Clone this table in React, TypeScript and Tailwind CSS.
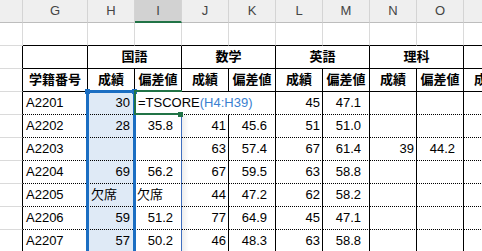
const grid = 'grid grid-cols-[23px_65px_47px_47px_47px_47px_47px_47px_47px_47px_47px]';

const letters = ['', 'G', 'H', 'I', 'J', 'K', 'L', 'M', 'N', 'O', 'P'];

type Row = { id: string; h: string; i: string; j: string; k: string; l: string; m: string; n: string; o: string };

const rows: Row[] = [
  { id: 'A2201', h: '30', i: '', j: '', k: '', l: '45', m: '47.1', n: '', o: '' },
  { id: 'A2202', h: '28', i: '35.8', j: '41', k: '45.6', l: '51', m: '51.0', n: '', o: '' },
  { id: 'A2203', h: '', i: '', j: '63', k: '57.4', l: '67', m: '61.4', n: '39', o: '44.2' },
  { id: 'A2204', h: '69', i: '56.2', j: '67', k: '59.5', l: '63', m: '58.8', n: '', o: '' },
  { id: 'A2205', h: '欠席', i: '欠席', j: '44', k: '47.2', l: '62', m: '58.2', n: '', o: '' },
  { id: 'A2206', h: '59', i: '51.2', j: '77', k: '64.9', l: '45', m: '47.1', n: '', o: '' },
  { id: 'A2207', h: '57', i: '50.2', j: '46', k: '48.3', l: '63', m: '58.8', n: '', o: '' },
];

const isNum = (v: string) => /^[0-9.]+$/.test(v);

// data cell: bottom dotted, right border solid
const dataCell = 'h-[23px] leading-[22px] border-b border-r border-b-black [border-bottom-style:dotted] whitespace-nowrap';

const Score = ({ v, extra = '' }: { v: string; extra?: string }) => (
  <div className={`${dataCell} border-r-black ${isNum(v) ? 'text-right pr-[2px]' : 'pl-[3px]'} ${extra}`}>{v}</div>
);

const Dev = ({ v, extra = '' }: { v: string; extra?: string }) => (
  <div className={`${dataCell} ${isNum(v) ? 'text-right pr-[8px]' : 'pl-[2px]'} ${extra}`}>{v}</div>
);

const App = () => {
  return (
    <div className="relative w-[482px] h-[251px] overflow-hidden bg-white text-[13px] text-black font-['Liberation_Sans','Noto_Sans_CJK_JP',sans-serif]">
      {/* column headers */}
      <div className={grid}>
        {letters.map((c) => (
          <div
            key={c || 'F'}
            className={`h-[23px] flex items-center justify-center border-r border-r-[#d4d4d4] text-[#444] ${
              c === 'I' ? 'bg-[#d2d2d2] border-b-2 border-b-[#217346]' : 'bg-[#efefef] border-b border-b-[#bdbdbd]'
            }`}
          >
            {c}
          </div>
        ))}
      </div>

      {/* row 1 (blank) */}
      <div className={grid}>
        {letters.map((c, idx) => (
          <div
            key={c || 'F'}
            className={`h-[23px] border-r border-r-[#dadada] border-b ${idx === 0 ? 'border-b-[#dadada]' : 'border-b-black'}`}
          />
        ))}
      </div>

      {/* row 2: subjects */}
      <div className={`${grid} font-bold`}>
        <div className="h-[23px] border-r border-r-black border-b border-b-[#dadada]" />
        <div className="h-[23px] border-r border-b border-black" />
        {['国語', '数学', '英語', '理科'].map((s) => (
          <div key={s} className="col-span-2 h-[23px] flex items-center justify-center border-r border-b border-black">
            {s}
          </div>
        ))}
        <div className="h-[23px] border-b border-black" />
      </div>

      {/* row 3: field names */}
      <div className={`${grid} font-bold`}>
        <div className="h-[23px] border-r border-r-black border-b border-b-[#dadada]" />
        {['学籍番号', '成績', '偏差値', '成績', '偏差値', '成績', '偏差値', '成績', '偏差値', '成績'].map((s, idx) => (
          <div key={idx} className="h-[23px] flex items-center justify-center border-r border-b border-black whitespace-nowrap">
            {s}
          </div>
        ))}
      </div>

      {/* data */}
      {rows.map((r, idx) => (
        <div key={r.id} className={grid}>
          <div className="h-[23px] border-r border-r-black border-b border-b-[#dadada]" />
          <div className={`${dataCell} border-r-black pl-[3px]`}>{r.id}</div>
          <Score v={r.h} extra="bg-[#dfeaf6] pr-[4px]" />
          {idx === 0 ? (
            <div className={`${dataCell} border-r-transparent pl-[3px] relative z-10 overflow-visible`}>
              =TSCORE<span className="text-[#3a7fd0]">(H4:H39)</span>
            </div>
          ) : (
            <Dev v={r.i} extra="border-r-[#3f6fbf]" />
          )}
          {idx === 0 ? (
            <div className={`${dataCell} border-r-transparent`} />
          ) : (
            <Score v={r.j} />
          )}
          <Dev v={r.k} extra="border-r-black" />
          <Score v={r.l} />
          <Dev v={r.m} extra="border-r-black" />
          <Score v={r.n} />
          <Dev v={r.o} extra="border-r-black" />
          <div className={`${dataCell} border-r-black`} />
        </div>
      ))}

      {/* reference range H4:H39 highlight */}
      <div className="absolute left-[86px] top-[90px] w-[50px] h-[200px] border-[3px] border-[#1b6ec2] pointer-events-none" />
      <div className="absolute left-[85px] top-[89px] w-[5px] h-[5px] bg-[#1b6ec2]" />
      <div className="absolute left-[132px] top-[89px] w-[5px] h-[5px] bg-[#1b6ec2]" />

      {/* active cell being edited */}
      <div className="absolute left-[134px] top-[90px] w-[48px] h-[25px] border-t-2 border-l-2 border-b-2 border-[#217346] z-20" />
      <div className="absolute left-[178px] top-[112px] w-[5px] h-[5px] bg-[#217346] z-20" />
      <div className="absolute left-[182px] top-[115px] w-[7px] h-[140px] bg-gradient-to-r from-black/[0.07] to-transparent" />
    </div>
  );
};

export default App;
